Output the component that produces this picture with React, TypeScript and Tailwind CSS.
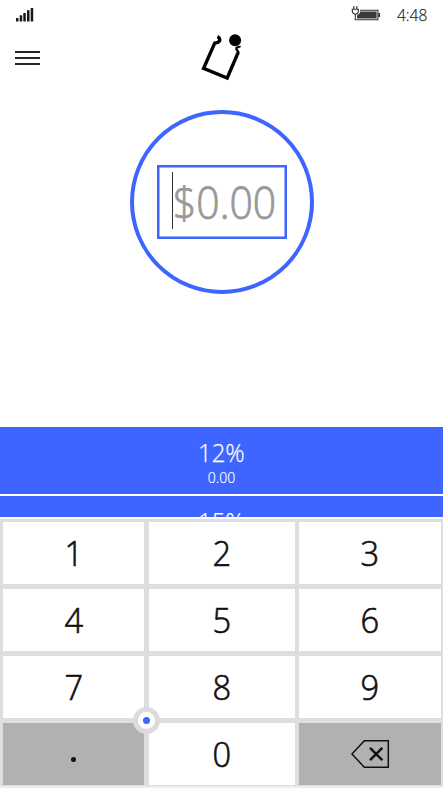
import React from "react";

const digitRows = [
  ["1", "2", "3"],
  ["4", "5", "6"],
  ["7", "8", "9"],
];

function StatusBar() {
  return (
    <div className="flex h-[30px] shrink-0 items-start justify-between pr-[15px] pl-4">
      <svg className="mt-2 h-[14px] w-[18px]" viewBox="0 0 18 14" fill="#181818">
        <rect x="0" y="10" width="2.5" height="3.5" />
        <rect x="3.7" y="7.3" width="2.5" height="6.2" />
        <rect x="7.3" y="5" width="2.5" height="8.5" />
        <rect x="11" y="2.2" width="2.5" height="11.3" />
        <rect x="14.7" y="0" width="2.5" height="13.5" />
      </svg>
      <div className="flex items-start">
        <svg className="mt-[5px] mr-[16px] h-[17px] w-[30px]" viewBox="0 0 30 17" fill="none" stroke="#303030">
          <path d="M2.8 1v3M5.8 1v3M1.3 4.2h6v2a3 3 0 0 1-6 0zM4.3 9.3v5.5h22.6V5.2H9" strokeWidth="1.1" />
          <path d="M9 6.6h16.6v6.8H6v-3L9 8z" fill="#3a3a3a" stroke="none" />
          <path d="M28.2 8v4" strokeWidth="1.7" />
        </svg>
        <span className="mt-[4px] block w-[31px] origin-left text-[15.5px] leading-[22px] font-light whitespace-nowrap text-[#333] [-webkit-text-stroke:0.25px_#333]">4:48</span>
      </div>
    </div>
  );
}

function Header() {
  return (
    <header className="flex h-[60px] shrink-0 items-start">
      <button aria-label="Menu" className="mt-[21px] ml-[15px] flex w-[25px] flex-col gap-[4px]">
        <span className="h-[2px] w-full bg-[#252525]" />
        <span className="h-[2px] w-full bg-[#252525]" />
        <span className="h-[2px] w-full bg-[#252525]" />
      </button>
      <svg className="ml-[160px] h-[52px] w-[44px]" viewBox="200 30 44 52" fill="none" stroke="#000">
        <path d="M217.4 36.6c2.9 1.3 3.4 4.4.3 5.8l-3 .7-11.1 25.2 23.6 9.7 10.9-25.4" strokeWidth="3.4" />
        <path d="M238.4 53.4c.6-3-2.8-3-2.1-5.2.4-1.5 3.2-.8 3.8-2.2" strokeWidth="2.4" />
        <circle cx="235.1" cy="40.3" r="6" fill="#000" stroke="none" />
      </svg>
    </header>
  );
}

function TipRow({ percent, amount }: { percent: string; amount?: string }) {
  return (
    <div className="flex h-[67px] shrink-0 flex-col items-center bg-[#3e65ff] pt-[10px] text-white">
      <span className="scale-x-[0.96] text-[25px] leading-[30px] font-light [-webkit-text-stroke:0.25px_white]">{percent}</span>
      {amount && <span className="mt-px text-[14px] leading-5 font-light [-webkit-text-stroke:0.2px_white]">{amount}</span>}
    </div>
  );
}

function Key({ children, dark = false }: { children: React.ReactNode; dark?: boolean }) {
  return (
    <button className={`flex items-center justify-center ${dark ? "bg-[#b1b1b1]" : "bg-white"}`}>
      {children}
    </button>
  );
}

function Keypad() {
  return (
    <div className="relative h-[269px] shrink-0 border-t border-b-2 border-t-[#dedede] border-b-[#eee] bg-[#dedede] px-[2.5px] pt-[2px] text-[34px] leading-none font-light text-[#111] [-webkit-text-stroke:0.65px_#111]">
      <div className="grid grid-cols-[141.5px_146px_142px] grid-rows-[62px_62px_62px_62px] gap-x-[4.5px] gap-y-[5px]">
        {digitRows.flat().map((digit) => (
          <Key key={digit}>
            <span className="-mt-px scale-x-[0.96]">{digit}</span>
          </Key>
        ))}
        <Key dark>
          <span className="mt-[11px] size-[5px] rounded-full bg-[#111]" />
        </Key>
        <Key>
          <span className="-mt-px scale-x-[0.96]">0</span>
        </Key>
        <Key dark>
          <svg className="h-[30px] w-[40px]" viewBox="0 0 40 30" fill="none" stroke="#111">
            <path d="M2 15 14.3 1.7h24v26.6h-24z" strokeWidth="1.5" />
            <path d="m20 8.8 12.3 12.4M32.3 8.8 20 21.2" strokeWidth="2.5" />
          </svg>
        </Key>
      </div>
      <span className="absolute top-[187px] left-[133px] flex size-[27px] items-center justify-center rounded-full border-[5px] border-[#dcdcdc] bg-white">
        <span className="size-[7px] rounded-full bg-[#3e65ff]" />
      </span>
    </div>
  );
}

export default function App() {
  return (
    <main className="flex h-[788px] w-[443px] flex-col overflow-hidden bg-white font-['Open_Sans','Noto_Sans',sans-serif]">
      <StatusBar />
      <Header />
      <section className="flex h-[337px] shrink-0 justify-center pt-[19.5px]">
        <div className="flex size-[184px] items-center justify-center rounded-full border-4 border-[#3e65ff]">
          <div className="flex h-[74px] w-[130px] items-center border-2 border-[#3e65ff] pl-[13px] shadow-[inset_0_0_0_0.5px_#3e65ff]">
            <span className="mb-[3px] h-[57px] w-px shrink-0 bg-[#333]" />
            <span className="mt-px block w-[103px] origin-left scale-x-[0.93] text-[44px] leading-[60px] font-light whitespace-nowrap text-[#999] [-webkit-text-stroke:0.9px_#999]">$0.00</span>
          </div>
        </div>
      </section>
      <section className="flex h-[92px] shrink-0 flex-col gap-[2px] overflow-hidden border-b-2 border-white">
        <TipRow percent="12%" amount="0.00" />
        <TipRow percent="15%" />
      </section>
      <Keypad />
    </main>
  );
}
